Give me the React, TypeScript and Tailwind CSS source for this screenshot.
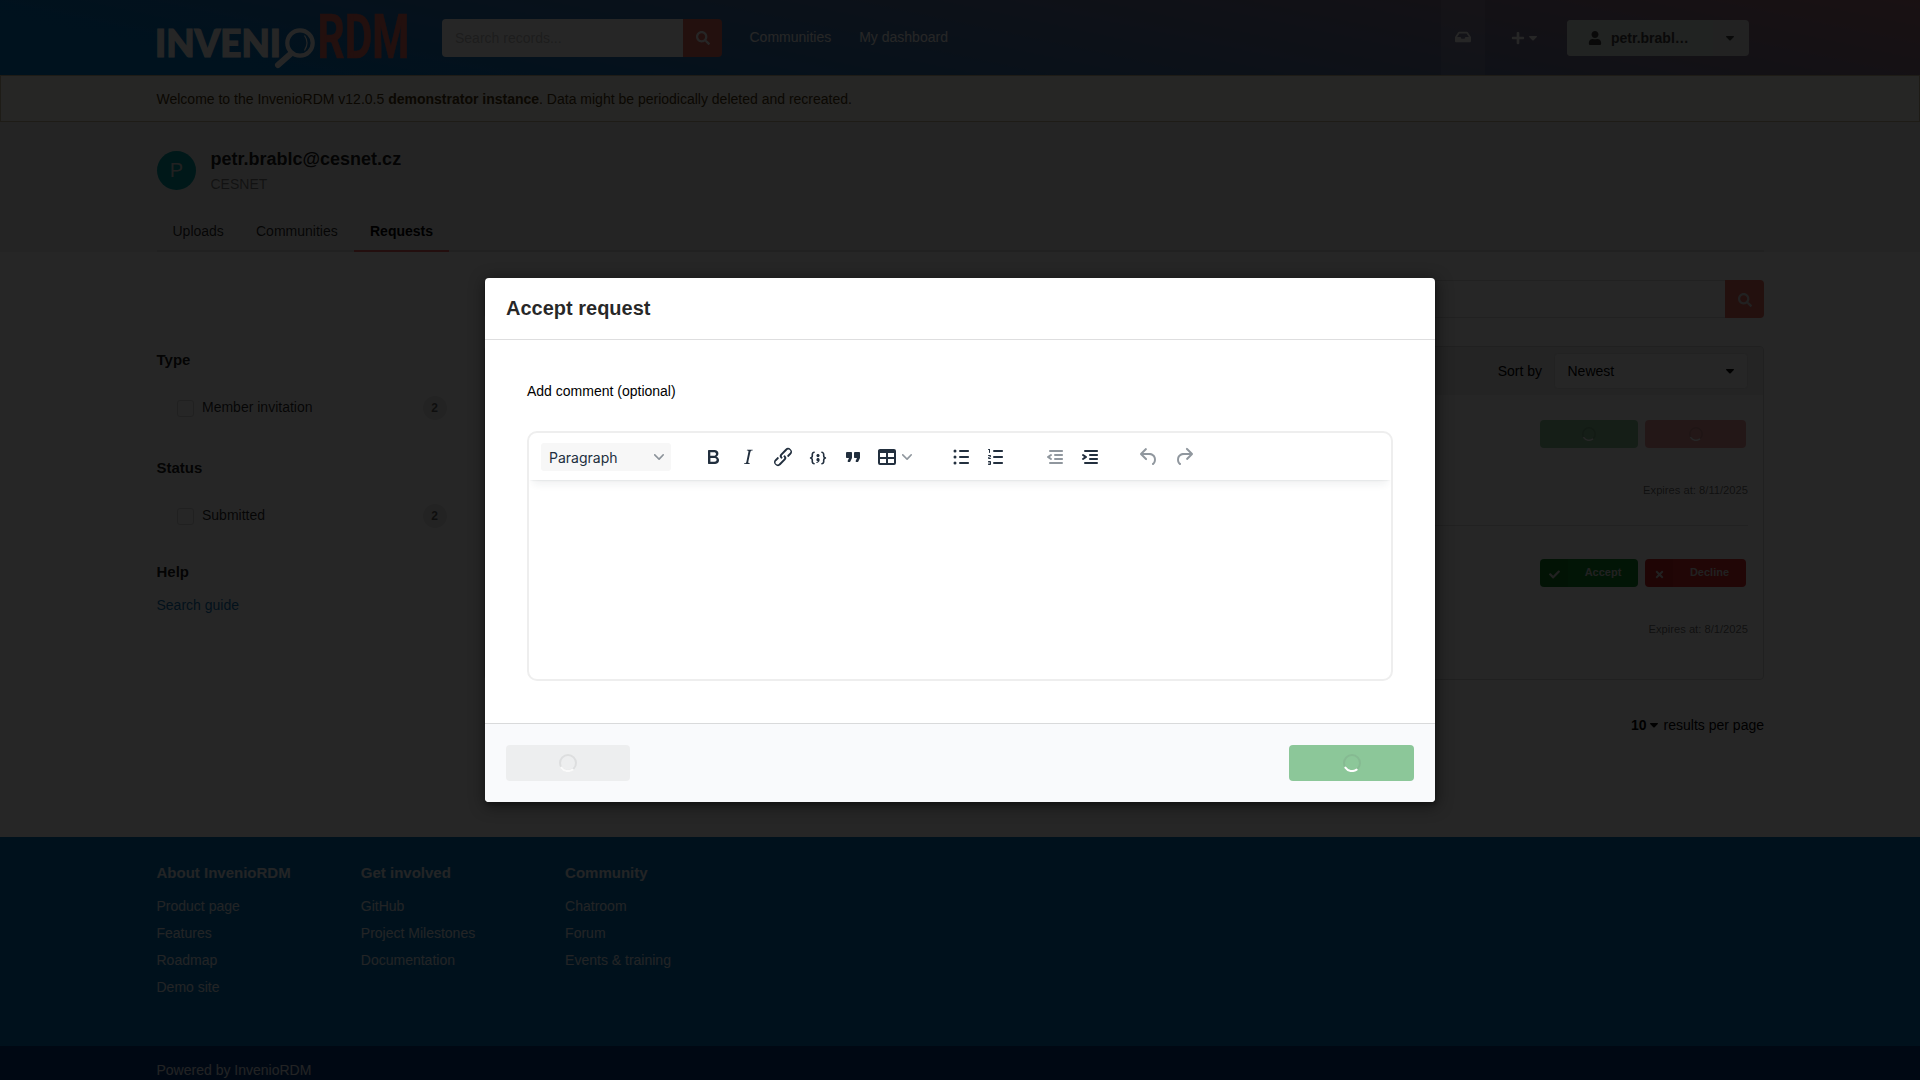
import React from "react";
import { FaSearch, FaInbox, FaPlus, FaUser, FaCheck, FaTimes } from "react-icons/fa";

const ICONS = {
  bold: "M7.8 19c-.3 0-.5 0-.6-.2l-.2-.5V5.7c0-.2 0-.4.2-.5l.6-.2h5c1.5 0 2.7.3 3.5 1 .7.6 1.1 1.4 1.1 2.5a3 3 0 0 1-.6 1.9c-.4.6-1 1-1.6 1.2.4.1.9.3 1.3.6s.8.7 1 1.2c.4.4.5 1 .5 1.6 0 1.3-.4 2.3-1.3 3-.8.7-2.1 1-3.8 1H7.8Zm5-8.3c.6 0 1.2-.1 1.6-.5.4-.3.6-.7.6-1.3 0-1.1-.8-1.7-2.3-1.7H9.3v3.5h3.4Zm.5 6c.7 0 1.3-.1 1.7-.4.4-.4.6-.9.6-1.5s-.2-1-.7-1.4c-.4-.3-1-.4-2-.4H9.4v3.8h4Z",
  italic: "m16.7 4.7-.1.9h-.3c-.6 0-1 0-1.4.3-.3.3-.4.6-.5 1.1l-2.1 9.8v.6c0 .5.4.8 1.4.8h.2l-.2.8H8l.2-.8h.2c1.1 0 1.8-.5 2-1.5l2-9.8.1-.5c0-.6-.4-.8-1.4-.8h-.3l.2-.9h5.8Z",
  link: "M6.2 12.3a1 1 0 0 1 1.4 1.4l-2 2a2 2 0 1 0 2.6 2.8l4.8-4.8a1 1 0 0 0 0-1.4 1 1 0 1 1 1.4-1.3 2.9 2.9 0 0 1 0 4L9.6 20a3.9 3.9 0 0 1-5.5-5.5l2-2Zm11.6-.6a1 1 0 0 1-1.4-1.4l2-2a2 2 0 1 0-2.6-2.8L11 10.3a1 1 0 0 0 0 1.4A1 1 0 1 1 9.6 13a2.9 2.9 0 0 1 0-4L14.4 4a3.9 3.9 0 0 1 5.5 5.5l-2 2Z",
  code: "M7.1 11a2.8 2.8 0 0 1-.8 2 2.8 2.8 0 0 1 .8 2v1.7c0 .3.1.6.4.8.2.3.5.4.8.4.3 0 .4.2.4.4v.8c0 .2-.1.4-.4.4-.7 0-1.4-.3-2-.8-.5-.6-.8-1.3-.8-2V15c0-.3-.1-.6-.4-.8-.2-.3-.5-.4-.8-.4a.4.4 0 0 1-.4-.4v-.8c0-.2.2-.4.4-.4.3 0 .6-.1.8-.4.3-.2.4-.5.4-.8V9.3c0-.7.3-1.4.8-2 .6-.5 1.3-.8 2-.8.3 0 .4.2.4.4v.8c0 .2-.1.4-.4.4-.3 0-.6.1-.8.4-.3.2-.4.5-.4.8V11Zm9.8 0V9.3c0-.3-.1-.6-.4-.8-.2-.3-.5-.4-.8-.4a.4.4 0 0 1-.4-.4V7c0-.2.1-.4.4-.4.7 0 1.4.3 2 .8.5.6.8 1.3.8 2V11c0 .3.1.6.4.8.2.3.5.4.8.4.2 0 .4.2.4.4v.8c0 .2-.2.4-.4.4-.3 0-.6.1-.8.4-.3.2-.4.5-.4.8v1.7c0 .7-.3 1.4-.8 2-.6.5-1.3.8-2 .8a.4.4 0 0 1-.4-.4v-.8c0-.2.1-.4.4-.4.3 0 .6-.1.8-.4.3-.2.4-.5.4-.8V15a2.8 2.8 0 0 1 .8-2 2.8 2.8 0 0 1-.8-2Zm-3.3-.4c0 .4-.1.8-.5 1.1-.3.3-.7.5-1.1.5-.4 0-.8-.2-1.1-.5-.4-.3-.5-.7-.5-1.1 0-.5.1-.9.5-1.2.3-.3.7-.4 1.1-.4.4 0 .8.1 1.1.4.4.3.5.7.5 1.2ZM12 13c.4 0 .8.1 1.1.5.4.3.5.7.5 1.1 0 1-.1 1.6-.5 2a3 3 0 0 1-1.1 1c-.4.3-.8.4-1.1.4a.5.5 0 0 1-.5-.5V17a3 3 0 0 0 1-.2l.6-.6c-.6 0-1-.2-1.3-.5-.2-.3-.3-.7-.3-1 0-.5.1-1 .5-1.2.3-.4.7-.5 1.1-.5Z",
  quote: "M7.5 17h.9c.4 0 .7-.2.9-.6L11 13V8c0-.6-.4-1-1-1H6a1 1 0 0 0-1 1v4c0 .6.4 1 1 1h2l-1.3 2.7a1 1 0 0 0 .8 1.3Zm8 0h.9c.4 0 .7-.2.9-.6L19 13V8c0-.6-.4-1-1-1h-4a1 1 0 0 0-1 1v4c0 .6.4 1 1 1h2l-1.3 2.7a1 1 0 0 0 .8 1.3Z",
  table: "M19 4a2 2 0 0 1 2 2v12a2 2 0 0 1-2 2H5a2 2 0 0 1-2-2V6c0-1.1.9-2 2-2h14ZM5 14v4h6v-4H5Zm14 0h-6v4h6v-4Zm0-6h-6v4h6V8ZM5 12h6V8H5v4Z",
  bullets: "M11 5h8c.6 0 1 .4 1 1s-.4 1-1 1h-8a1 1 0 0 1 0-2Zm0 6h8c.6 0 1 .4 1 1s-.4 1-1 1h-8a1 1 0 0 1 0-2Zm0 6h8c.6 0 1 .4 1 1s-.4 1-1 1h-8a1 1 0 0 1 0-2ZM4.5 6a1.5 1.5 0 1 1 3 0 1.5 1.5 0 0 1-3 0Zm0 6a1.5 1.5 0 1 1 3 0 1.5 1.5 0 0 1-3 0Zm0 6a1.5 1.5 0 1 1 3 0 1.5 1.5 0 0 1-3 0Z",
  numbers: "M10 17h8c.6 0 1 .4 1 1s-.4 1-1 1h-8a1 1 0 0 1 0-2Zm0-6h8c.6 0 1 .4 1 1s-.4 1-1 1h-8a1 1 0 0 1 0-2Zm0-6h8c.6 0 1 .4 1 1s-.4 1-1 1h-8a1 1 0 1 1 0-2ZM6 4v3.5c0 .3-.2.5-.5.5a.5.5 0 0 1-.5-.5V5h-.5a.5.5 0 0 1 0-1H6Zm-1 8.8.2.2h1.3c.3 0 .5.2.5.5s-.2.5-.5.5H4.9a1 1 0 0 1-.9-1V13c0-.4.3-.8.6-1l1.2-.4.2-.3a.2.2 0 0 0-.2-.2H4.5a.5.5 0 0 1-.5-.5c0-.3.2-.5.5-.5h1.6c.5 0 .9.4.9 1v.1c0 .4-.3.8-.6 1l-1.2.4-.2.3ZM7 17v2c0 .6-.4 1-1 1H4.5a.5.5 0 0 1 0-1h1.2c.2 0 .3-.1.3-.3 0-.2-.1-.3-.3-.3H4.4a.4.4 0 1 1 0-.8h1.3c.2 0 .3-.1.3-.3 0-.2-.1-.3-.3-.3H4.5a.5.5 0 1 1 0-1H6c.6 0 1 .4 1 1Z",
  outdent: "M7 5h12c.6 0 1 .4 1 1s-.4 1-1 1H7a1 1 0 1 1 0-2Zm5 4h7c.6 0 1 .4 1 1s-.4 1-1 1h-7a1 1 0 0 1 0-2Zm0 4h7c.6 0 1 .4 1 1s-.4 1-1 1h-7a1 1 0 0 1 0-2Zm-5 4h12a1 1 0 0 1 0 2H7a1 1 0 0 1 0-2Zm1.6-3.8a1 1 0 0 1-1.2 1.6l-3-2a1 1 0 0 1 0-1.6l3-2a1 1 0 0 1 1.2 1.6L6.8 12l1.8 1.2Z",
  indent: "M7 5h12c.6 0 1 .4 1 1s-.4 1-1 1H7a1 1 0 1 1 0-2Zm5 4h7c.6 0 1 .4 1 1s-.4 1-1 1h-7a1 1 0 0 1 0-2Zm0 4h7c.6 0 1 .4 1 1s-.4 1-1 1h-7a1 1 0 0 1 0-2Zm-5 4h12a1 1 0 0 1 0 2H7a1 1 0 0 1 0-2Zm-2.6-3.8L6.2 12l-1.8-1.2a1 1 0 0 1 1.2-1.6l3 2a1 1 0 0 1 0 1.6l-3 2a1 1 0 1 1-1.2-1.6Z",
  undo: "M6.4 8H12c3.7 0 6.2 2 6.8 5.1.6 2.7-.4 5.6-2.3 6.8a1 1 0 0 1-1-1.8c1.1-.6 1.8-2.7 1.4-4.6-.5-2.1-2.1-3.5-4.9-3.5H6.4l3.3 3.3a1 1 0 1 1-1.4 1.4l-5-5a1 1 0 0 1 0-1.4l5-5a1 1 0 0 1 1.4 1.4L6.4 8Z",
  redo: "M17.6 10H12c-2.8 0-4.4 1.4-4.9 3.5-.4 2 .3 4 1.4 4.6a1 1 0 1 1-1 1.8c-2-1.2-2.9-4.1-2.3-6.8.6-3 3-5.1 6.8-5.1h5.6l-3.3-3.3a1 1 0 1 1 1.4-1.4l5 5a1 1 0 0 1 0 1.4l-5 5a1 1 0 0 1-1.4-1.4l3.3-3.3Z",
};

function Tool({ name, disabled = false }: { name: keyof typeof ICONS; disabled?: boolean }) {
  return (
    <button aria-label={name} className={`w-[35px] shrink-0 pl-[6px] ${disabled ? "text-[#222f3e]/50" : "text-[#222f3e]"}`}>
      <svg width="24" height="24" viewBox="0 0 24 24" fill="currentColor" fillRule="evenodd">
        <path d={ICONS[name]} />
      </svg>
    </button>
  );
}

function Chevron({ className = "" }: { className?: string }) {
  return (
    <svg width="10" height="10" viewBox="0 0 10 10" fill="currentColor" className={`shrink-0 text-[#222f3e]/50 ${className}`}>
      <path d="M8.7 2.2c.3-.3.8-.3 1 0 .4.4.4.9 0 1.2L5.7 7.8c-.3.3-.9.3-1.2 0L.2 3.4a.8.8 0 0 1 0-1.2c.3-.3.8-.3 1.1 0L5 6l3.7-3.8Z" />
    </svg>
  );
}

function Spinner({ size, track, arc }: { size: number; track: string; arc: string }) {
  return (
    <svg width={size} height={size} viewBox="0 0 18 18" fill="none" strokeWidth="2">
      <circle cx="9" cy="9" r="8" stroke={track} />
      <path d="M2.4 13.6A8 8 0 0 0 13.6 15.6" stroke={arc} strokeLinecap="round" />
    </svg>
  );
}

function Caret({ className = "" }: { className?: string }) {
  return (
    <svg width="8" height="5" viewBox="0 0 8 5" fill="currentColor" className={`shrink-0 ${className}`}>
      <path d="M.6 0h6.8c.5 0 .8.6.4 1L4.4 4.4a.6.6 0 0 1-.8 0L.2 1C-.2.6.1 0 .6 0Z" />
    </svg>
  );
}

function Logo() {
  return (
    <svg width="268" height="75" viewBox="149 0 268 75" className="shrink-0 overflow-visible">
      <text x="155" y="57" fontFamily="Lato" fontWeight="900" fontSize="38.5" textLength="126" lengthAdjust="spacingAndGlyphs" fill="#fff" stroke="#fff" strokeWidth="1.2">
        INVENI
      </text>
      <circle cx="300" cy="43" r="12.7" fill="none" stroke="#fff" strokeWidth="4.2" />
      <path d="M304.5 35.5q5 7 0 15" fill="none" stroke="#fff" strokeWidth="1.2" />
      <path d="M291 53.5l-13 11.5" stroke="#fff" strokeWidth="6" strokeLinecap="round" />
      <text x="317.5" y="57.8" fontFamily="Roboto" fontWeight="700" fontSize="60.5" textLength="92" lengthAdjust="spacingAndGlyphs" fill="#ea6a5e" stroke="#ea6a5e" strokeWidth="0.6">
        RDM
      </text>
    </svg>
  );
}

function Header() {
  return (
    <header className="flex h-[75px] items-center bg-[linear-gradient(12deg,#0077c8_12%,#a8707c_100%)] pl-[149px] text-white">
      <Logo />
      <div className="mt-px ml-[25px] flex h-[38px] w-[280px] overflow-hidden rounded">
        <div className="flex flex-1 items-center bg-white pl-[13px] text-[#bfbfbf]">Search records...</div>
        <div className="flex w-[39px] items-center justify-center bg-[#ea6a5e]">
          <FaSearch size={14} />
        </div>
      </div>
      <nav className="flex w-[719px] gap-[28px] pb-px pl-[27.5px]">
        <a>Communities</a>
        <a>My dashboard</a>
      </nav>
      <div className="flex h-full w-11 items-center justify-center bg-white/10 pb-[2px]">
        <FaInbox size={16} />
      </div>
      <div className="mt-px ml-[26px] flex items-center gap-1">
        <FaPlus size={14} />
        <Caret />
      </div>
      <div className="mt-px ml-[30px] flex h-9 w-[182px] overflow-hidden rounded bg-[#e0e4e1] font-bold text-[#3f4140]">
        <div className="flex w-[146px] items-center bg-[#dfe6e1] pl-[21px]">
          <FaUser size={14} className="mr-[9px]" />
          petr.brabl…
        </div>
        <div className="flex flex-1 items-center justify-center pr-[2px]">
          <Caret />
        </div>
      </div>
    </header>
  );
}

function Facet({ title, option }: { title: string; option: string }) {
  return (
    <section>
      <h3 className="text-[15px] leading-5 font-bold text-black/90">{title}</h3>
      <div className="mt-[26px] flex h-6 items-center pl-5">
        <span className="size-[17px] rounded-[3px] border border-[#d4d4d5]" />
        <span className="ml-[8.5px] flex-1 pb-[2px] text-black/85">{option}</span>
        <span className="mr-[1.5px] flex size-6 items-center justify-center rounded-full bg-[#e8e8e8] text-xs font-bold text-black/60">2</span>
      </div>
    </section>
  );
}

function ActionButton({ decline = false, loading = false }: { decline?: boolean; loading?: boolean }) {
  if (loading) {
    return (
      <div className={`flex h-7 items-center justify-center rounded ${decline ? "w-[101px] bg-[#ea9d9d]" : "w-[98px] bg-[#8cc799]"}`}>
        <Spinner size={14} track="rgba(0,0,0,.12)" arc="#fff" />
      </div>
    );
  }
  return (
    <div className={`flex h-7 overflow-hidden rounded text-[11px] font-bold text-[#ddd] ${decline ? "w-[101px] bg-[#db2828]" : "w-[98px] bg-[#118a2a]"}`}>
      <span className="flex w-[28px] items-center justify-center bg-black/5 pt-0.5">{decline ? <FaTimes size={11} /> : <FaCheck size={11} />}</span>
      <span className="flex flex-1 items-center justify-center pb-px">{decline ? "Decline" : "Accept"}</span>
    </div>
  );
}

function RequestRow({ date, loading = false }: { date: string; loading?: boolean }) {
  return (
    <div className="flex flex-col items-end">
      <div className="mr-[2px] flex gap-[7px]">
        <ActionButton loading={loading} />
        <ActionButton loading={loading} decline />
      </div>
      <div className="mt-[32px] text-[11.2px] leading-5 text-black/60">Expires at: {date}</div>
    </div>
  );
}

const FOOTER = [
  { title: "About InvenioRDM", links: ["Product page", "Features", "Roadmap", "Demo site"] },
  { title: "Get involved", links: ["GitHub", "Project Milestones", "Documentation"] },
  { title: "Community", links: ["Chatroom", "Forum", "Events & training"] },
];

function Page() {
  return (
    <div className="flex h-[1080px] flex-col bg-white">
      <Header />
      <div className="flex h-[47px] items-center border border-[#c9ba9b] bg-[#fffaf3] pl-[155.5px] text-[#4a3710]">
        <p>
          Welcome to the InvenioRDM v12.0.5 <b>demonstrator instance</b>. Data might be periodically deleted and recreated.
        </p>
      </div>
      <div className="h-[130px] bg-[#f1f1f1] pl-[157px]">
        <div className="flex h-[87px] items-center gap-[14.5px] pt-[10px]">
          <div className="flex size-[39px] items-center justify-center rounded-full bg-[#009fa5] pb-px text-xl text-[#ddd]">P</div>
          <div>
            <div className="-mt-px text-lg leading-6 font-bold text-black/90">petr.brablc@cesnet.cz</div>
            <div className="mt-[3px] leading-5 text-black/50">CESNET</div>
          </div>
        </div>
        <div className="flex h-[43px] w-[1607px] leading-[44px] text-black/85 shadow-[inset_0_-2px_0_#dcdddd]">
          <a className="w-[83px] pl-[15.5px]">Uploads</a>
          <a className="w-[114px] pl-4">Communities</a>
          <a className="h-[43px] w-[95px] text-center font-bold text-black shadow-[inset_0_-2px_0_#e8605c]">Requests</a>
        </div>
      </div>
      <div className="flex h-[585px] pl-[156.5px]">
        <aside className="w-[291.5px] pt-[98px]">
          <Facet title="Type" option="Member invitation" />
          <div className="h-[38px]" />
          <Facet title="Status" option="Submitted" />
          <h3 className="mt-[34px] text-[15px] leading-5 font-bold text-black/90">Help</h3>
          <a className="mt-[13px] block leading-5 text-[#0f73b5]">Search guide</a>
        </aside>
        <main className="ml-[36px] w-[1280px] pt-7">
          <div className="flex h-[38px] overflow-hidden rounded">
            <div className="flex-1 border border-r-0 border-[#dededf]" />
            <div className="flex w-[39px] items-center justify-center bg-[#ea6a5e] pt-px text-[#ddd]">
              <FaSearch size={14} />
            </div>
          </div>
          <div className="mt-[28px] h-[334px] overflow-hidden rounded border border-[#d4d4d5]">
            <div className="flex h-12 items-center justify-end bg-[#ededed] pr-[15px]">
              <span className="mr-3">Sort by</span>
              <div className="flex h-9 w-[194px] items-center justify-between rounded border border-[#e4e4e5] bg-white pr-[13px] pl-[12.5px]">
                Newest
                <Caret />
              </div>
            </div>
            <div className="pt-[25px] pr-[15px]">
              <RequestRow date="8/11/2025" loading />
              <div className="mt-[25px] mb-[33px] h-px bg-[#dcdddd]" />
              <RequestRow date="8/1/2025" />
            </div>
          </div>
          <div className="mt-[35px] flex items-center justify-end leading-5">
            <b>10</b>
            <Caret className="mr-[6px] ml-[3px]" />
            results per page
          </div>
        </main>
      </div>
      <footer className="flex-1 bg-[#0071bc] text-[#fff]/90">
        <div className="flex h-[209px] pt-[26px] pl-[156.5px]">
          {FOOTER.map((col) => (
            <div key={col.title} className="w-[204.3px]">
              <h4 className="text-[15px] leading-5 font-bold">{col.title}</h4>
              <ul className="mt-[10px] leading-[27px]">
                {col.links.map((l) => (
                  <li key={l}>{l}</li>
                ))}
              </ul>
            </div>
          ))}
        </div>
        <div className="h-[34px] bg-[#00377f] pt-[14px] pl-[156.5px] leading-5">Powered by InvenioRDM</div>
      </footer>
    </div>
  );
}

function Modal() {
  return (
    <div className="flex h-[524px] w-[950px] flex-col rounded-[4px] bg-white shadow-[1px_3px_3px_0_rgba(0,0,0,.2),1px_3px_15px_2px_rgba(0,0,0,.4)]">
      <div className="flex h-[62px] shrink-0 items-center border-b border-[#dededf] px-[21px] pb-px text-xl font-bold text-black/85">Accept request</div>
      <div className="flex-1 px-[42px] pt-[41px]">
        <label className="block leading-5">Add comment (optional)</label>
        <div className="mt-[30px] h-[250px] w-[866px] overflow-hidden rounded-[10px] border-2 border-[#eee]">
          <div className="flex h-[47px] items-center pl-3 shadow-[0_2px_2px_-2px_rgba(34,47,62,.15),0_8px_8px_-4px_rgba(34,47,62,.07)]">
            <div className="mr-6 flex h-7 w-[130px] shrink-0 items-center justify-between rounded-[3px] bg-[#f7f7f7] pr-[7px] pl-2 font-['Inter'] text-[#222f3e]">
              <span className="pt-[2px]">Paragraph</span>
              <Chevron />
            </div>
            <Tool name="bold" />
            <Tool name="italic" />
            <Tool name="link" />
            <Tool name="code" />
            <Tool name="quote" />
            <div className="mr-[31px] -ml-px flex items-center">
              <Tool name="table" />
              <Chevron className="-ml-[2px]" />
            </div>
            <Tool name="bullets" />
            <Tool name="numbers" />
            <div className="w-6" />
            <Tool name="outdent" disabled />
            <Tool name="indent" />
            <div className="w-6" />
            <Tool name="undo" disabled />
            <Tool name="redo" disabled />
          </div>
        </div>
      </div>
      <div className="flex h-[79px] shrink-0 items-center justify-between rounded-b-[4px] border-t border-[#d9dadb] bg-[#f9fafc] px-[21px]">
        <button aria-label="Cancel" className="flex h-9 w-[124px] items-center justify-center rounded bg-[#edeeef]">
          <Spinner size={18} track="#dddedf" arc="#fafafa" />
        </button>
        <button aria-label="Accept" className="flex h-9 w-[125px] items-center justify-center rounded bg-[#8cc799]">
          <Spinner size={18} track="#86ba92" arc="#fff" />
        </button>
      </div>
    </div>
  );
}

export default function App() {
  return (
    <div className="relative h-[1080px] w-[1920px] overflow-hidden font-['Liberation_Sans',Arial,sans-serif] text-sm text-black">
      <Page />
      <div className="absolute inset-0 flex items-center justify-center bg-black/85">
        <Modal />
      </div>
    </div>
  );
}
